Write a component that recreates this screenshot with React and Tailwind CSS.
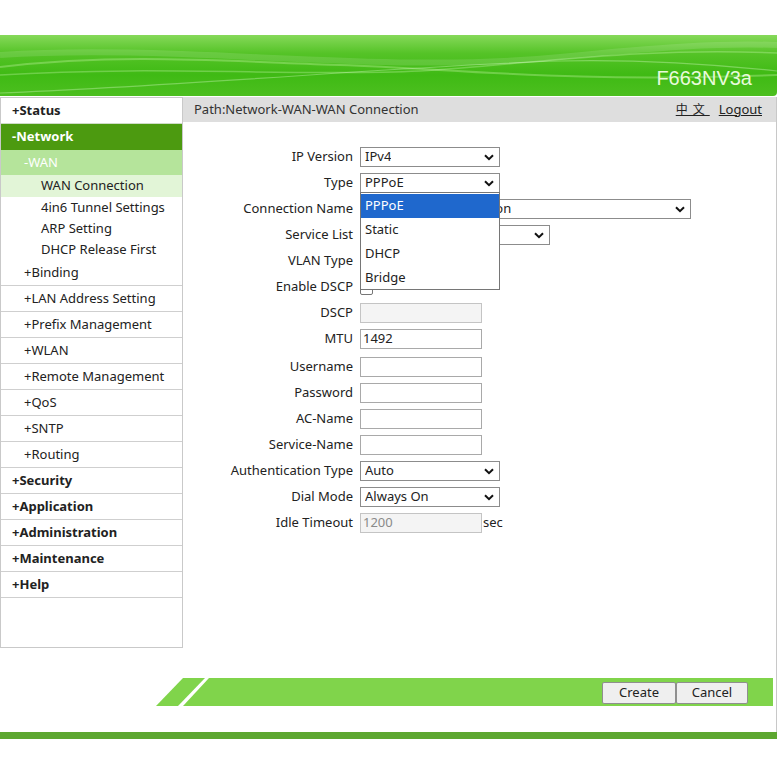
import React from 'react';

const Chevron = () => (
  <svg width="10" height="7" viewBox="0 0 10 7" className="shrink-0">
    <path d="M1 1.2l4 4 4-4" fill="none" stroke="#111" strokeWidth="2" />
  </svg>
);

const Select = ({ value, width }) => (
  <div className={`flex items-center justify-between h-[20px] border border-[#8c8c8c] bg-white pl-[4px] pr-[5px] ${width}`}>
    <span className="whitespace-nowrap overflow-hidden">{value}</span>
    <Chevron />
  </div>
);

const Input = ({ value, disabled }) => (
  <div className={`h-[20px] w-[122px] border flex items-center pl-[2px] ${disabled ? 'bg-[#f4f4f4] border-[#c4c4c4] text-[#8a8a8a]' : 'bg-white border-[#a9a9a9]'}`}>
    {value}
  </div>
);

const Row = ({ label, children, extra }) => (
  <div className={`flex items-center h-[26px] ${extra || ''}`}>
    <div className="w-[170px] text-right">{label}</div>
    <div className="ml-[7px] flex items-center">{children}</div>
  </div>
);

const App = () => {
  const subItems = ['+LAN Address Setting', '+Prefix Management', '+WLAN', '+Remote Management', '+QoS', '+SNTP', '+Routing'];
  const topItems = ['+Security', '+Application', '+Administration', '+Maintenance', '+Help'];

  return (
    <div className="w-[782px] h-[782px] bg-white text-[13px] text-[#222] font-['Noto_Sans',sans-serif] overflow-hidden">
      <div className="h-[35px]" />

      {/* header */}
      <div className="relative w-[777px] h-[61px] rounded-br-[4px] overflow-hidden bg-[linear-gradient(180deg,#86d95a_0%,#55c327_30%,#3fba14_65%,#4cbf1f_100%)]">
        <svg className="absolute inset-0" width="777" height="61" viewBox="0 0 777 61">
          <path d="M0 32 C120 18 220 26 340 30 C460 34 560 48 777 40" fill="none" stroke="#c8f5a8" strokeOpacity="0.35" strokeWidth="2" />
          <path d="M0 40 C160 30 300 42 420 36 C540 28 640 12 777 18" fill="none" stroke="#d8ffc0" strokeOpacity="0.3" strokeWidth="1.5" />
          <path d="M0 58 C200 50 420 30 560 26 C650 24 720 30 777 36" fill="none" stroke="#e0ffd0" strokeOpacity="0.35" strokeWidth="1.2" />
          <path d="M0 20 C180 8 380 40 560 22 C660 12 720 8 777 10" fill="none" stroke="#ffffff" strokeOpacity="0.12" strokeWidth="6" />
        </svg>
        <div className="absolute right-[25px] bottom-[8px] text-[20px] text-[#e8fadb] font-['Liberation_Sans',sans-serif] leading-none">F663NV3a</div>
      </div>

      <div className="w-[777px] h-[635px] mt-[1px] border-r border-[#c8c8c8]">
        <div className="flex">
          {/* sidebar */}
          <aside className="w-[183px] h-[551px] border border-[#c9c9c9] shrink-0">
            <div className="h-[26px] flex items-center pl-[11px] font-bold border-b border-[#cfdcc8]">+Status</div>
            <div className="h-[26px] flex items-center pl-[11px] font-bold text-white bg-[#4c9a10]">-Network</div>
            <div className="h-[25px] flex items-center pl-[23px] text-white bg-[#b5e49b]">-WAN</div>
            <div className="h-[22px] flex items-center pl-[40px] bg-[#e2f5d7]">WAN Connection</div>
            <div className="h-[21px] flex items-center pl-[40px]">4in6 Tunnel Settings</div>
            <div className="h-[21px] flex items-center pl-[40px]">ARP Setting</div>
            <div className="h-[21px] flex items-center pl-[40px]">DHCP Release First</div>
            <div className="h-[26px] flex items-center pl-[23px] border-b border-[#cfcfcf]">+Binding</div>
            {subItems.map((s) => (
              <div key={s} className="h-[26px] flex items-center pl-[23px] border-b border-[#cfcfcf]">{s}</div>
            ))}
            {topItems.map((s) => (
              <div key={s} className="h-[26px] flex items-center pl-[11px] font-bold border-b border-[#cfcfcf]">{s}</div>
            ))}
          </aside>

          {/* main */}
          <main className="flex-1">
            <div className="h-[25px] bg-[#dedede] flex items-center justify-between pl-[11px] pr-[14px] text-[#333]">
              <span>Path:Network-WAN-WAN Connection</span>
              <div className="flex gap-[14px] text-[#222]">
                <span className="underline font-['Noto_Sans_CJK_SC',sans-serif] text-[12px] tracking-[5px] mr-[-5px]">中文</span>
                <span className="underline">Logout</span>
              </div>
            </div>

            <div className="relative pt-[22px]">
              <Row label="IP Version"><Select value="IPv4" width="w-[140px]" /></Row>
              <Row label="Type"><Select value="PPPoE" width="w-[140px]" /></Row>
              <Row label="Connection Name"><Select value="Create WAN Connection" width="w-[331px]" /></Row>
              <Row label="Service List"><Select value="" width="w-[190px]" /></Row>
              <Row label="VLAN Type"><Select value="" width="w-[120px]" /></Row>
              <Row label="Enable DSCP">
                <div className="w-[13px] h-[13px] border border-[#767676] rounded-[2px] bg-white mt-[3px]" />
              </Row>
              <Row label="DSCP"><Input value="" disabled /></Row>
              <Row label="MTU"><Input value="1492" /></Row>
              <Row label="Username" extra="mt-[2px]"><Input value="" /></Row>
              <Row label="Password"><Input value="" /></Row>
              <Row label="AC-Name"><Input value="" /></Row>
              <Row label="Service-Name"><Input value="" /></Row>
              <Row label="Authentication Type"><Select value="Auto" width="w-[140px]" /></Row>
              <Row label="Dial Mode"><Select value="Always On" width="w-[140px]" /></Row>
              <Row label="Idle Timeout">
                <Input value="1200" disabled />
                <span className="ml-[1px]">sec</span>
              </Row>

              {/* open dropdown list */}
              <div className="absolute left-[177px] top-[70px] w-[140px] h-[98px] bg-white border border-[#767676] pt-[1px]">
                <div className="h-[24px] flex items-center pl-[4px] bg-[#1f68cd] text-white">PPPoE</div>
                <div className="h-[24px] flex items-center pl-[4px]">Static</div>
                <div className="h-[24px] flex items-center pl-[4px]">DHCP</div>
                <div className="h-[24px] flex items-center pl-[4px]">Bridge</div>
              </div>
            </div>
          </main>
        </div>

        {/* footer action bar */}
        <div className="flex mt-[30px] ml-[156px] w-[617px] h-[28px]">
          <svg width="53" height="28" viewBox="0 0 53 28" className="shrink-0">
            <polygon points="0,28 27,0 49,0 22,28" fill="#80d44b" />
            <polygon points="27,28 53,0 53,28" fill="#80d44b" />
          </svg>
          <div className="flex-1 bg-[#80d44b] flex items-center justify-end pr-[25px] pt-[2px]">
            <button className="w-[74px] h-[22px] bg-[#efefef] border border-[#8f8f8f] rounded-[2px] text-[13px]">Create</button>
            <button className="w-[72px] h-[22px] bg-[#efefef] border border-[#8f8f8f] rounded-[2px] text-[13px]">Cancel</button>
          </div>
        </div>
      </div>

      <div className="w-[777px] h-[7px] bg-[#5da730]" />
    </div>
  );
};

export default App;
